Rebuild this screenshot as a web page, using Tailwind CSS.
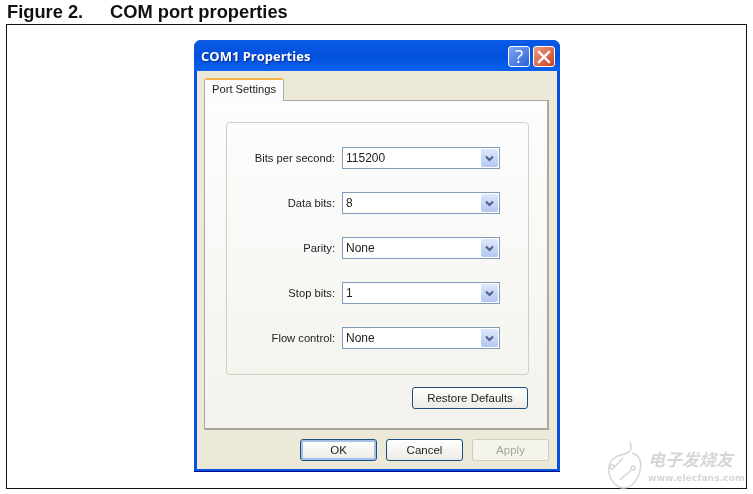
<!DOCTYPE html>
<html lang="en">
<head>
  <meta charset="UTF-8">
  <title>COM port properties</title>
  <script src="https://cdn.jsdelivr.net/npm/@tailwindcss/browser@4"></script>
</head>
<body class="bg-white w-[753px] h-[494px] overflow-hidden font-['Liberation_Sans',sans-serif]">
  <div class="pl-[7px] pt-[2px] h-[24px] flex text-[18.3px] leading-[19px] font-bold text-[#111] blur-[0.3px]">
    <span class="w-[103px]">Figure 2.</span>
    <span>COM port properties</span>
  </div>

  <div class="relative ml-[6px] w-[741px] h-[465px] border border-[#111] pt-[15px] pl-[187px]">
    <!-- dialog window -->
    <div class="w-[366px] h-[432px] flex flex-col rounded-t-[7px] bg-[#0a50e0] p-[3px] pt-0 pb-[3px] shadow-[inset_0_-1px_0_#00138c] blur-[0.4px]">
      <div class="h-[31px] -mx-[3px] px-[7px] rounded-t-[7px] flex items-center justify-between bg-gradient-to-b from-[#0a5ae8] via-[#0450dc] to-[#0a62f0]">
        <span class="pt-[3px] text-[13px] font-bold text-white font-['Open_Sans',sans-serif] [text-shadow:1px_1px_1px_#0a2a90]">COM1 Properties</span>
        <div class="flex gap-[3px] -mr-[2px] mt-[2px]">
          <div class="w-[22px] h-[21px] rounded-[3px] border border-white bg-gradient-to-br from-[#7fa8f2] to-[#2a5fd8] flex items-center justify-center text-white text-[19px] leading-none font-['Open_Sans',sans-serif]">?</div>
          <div class="w-[22px] h-[21px] rounded-[3px] border border-white bg-gradient-to-br from-[#ec9a7c] to-[#c8401c] flex items-center justify-center">
            <svg width="14" height="14" viewBox="0 0 14 14"><path d="M2 2l10 10M12 2L2 12" stroke="#fff" stroke-width="2.4" stroke-linecap="square"/></svg>
          </div>
        </div>
      </div>

      <div class="flex-1 bg-[#ece9d8] px-[7px] pt-[7px] flex flex-col text-[11.2px] text-[#222]">
        <!-- tab strip -->
        <div class="flex h-[23px] -mb-px relative z-10">
          <div class="w-[80px] h-[23px] pb-[3px] bg-[#fcfcfe] rounded-t-[3px] border-t-[2px] border-t-[#f5b445] border-x border-x-[#b0aea0] flex items-center justify-center">Port Settings</div>
        </div>
        <!-- tab panel -->
        <div class="w-[345px] h-[330px] border border-[#a9a89e] border-b-2 border-r-2 bg-gradient-to-b from-[#fdfdfe] to-[#f3f2ec] pt-[21px] pl-[21px]">
          <div class="w-[303px] h-[253px] border border-[#d0d0bf] rounded-[4px] pt-[24px] pl-[20px] flex flex-col gap-[23px]">
            <div class="flex items-center h-[22px]">
              <span class="w-[95px] pr-[7px] text-right whitespace-nowrap">Bits per second:</span>
              <div class="w-[158px] h-[22px] border border-[#7f9db9] bg-white pl-[3px] text-[12px] flex items-center justify-between"><span>115200</span><div class="w-[17px] h-[18px] mr-px rounded-[2px] bg-gradient-to-b from-[#dfe8fb] to-[#b3c7f2] flex items-center justify-center"><svg width="9" height="7" viewBox="0 0 9 7"><path d="M1 1.5l3.5 3.5L8 1.5" fill="none" stroke="#4d6185" stroke-width="2"/></svg></div></div>
            </div>
            <div class="flex items-center h-[22px]">
              <span class="w-[95px] pr-[7px] text-right whitespace-nowrap">Data bits:</span>
              <div class="w-[158px] h-[22px] border border-[#7f9db9] bg-white pl-[3px] text-[12px] flex items-center justify-between"><span>8</span><div class="w-[17px] h-[18px] mr-px rounded-[2px] bg-gradient-to-b from-[#dfe8fb] to-[#b3c7f2] flex items-center justify-center"><svg width="9" height="7" viewBox="0 0 9 7"><path d="M1 1.5l3.5 3.5L8 1.5" fill="none" stroke="#4d6185" stroke-width="2"/></svg></div></div>
            </div>
            <div class="flex items-center h-[22px]">
              <span class="w-[95px] pr-[7px] text-right whitespace-nowrap">Parity:</span>
              <div class="w-[158px] h-[22px] border border-[#7f9db9] bg-white pl-[3px] text-[12px] flex items-center justify-between"><span>None</span><div class="w-[17px] h-[18px] mr-px rounded-[2px] bg-gradient-to-b from-[#dfe8fb] to-[#b3c7f2] flex items-center justify-center"><svg width="9" height="7" viewBox="0 0 9 7"><path d="M1 1.5l3.5 3.5L8 1.5" fill="none" stroke="#4d6185" stroke-width="2"/></svg></div></div>
            </div>
            <div class="flex items-center h-[22px]">
              <span class="w-[95px] pr-[7px] text-right whitespace-nowrap">Stop bits:</span>
              <div class="w-[158px] h-[22px] border border-[#7f9db9] bg-white pl-[3px] text-[12px] flex items-center justify-between"><span>1</span><div class="w-[17px] h-[18px] mr-px rounded-[2px] bg-gradient-to-b from-[#dfe8fb] to-[#b3c7f2] flex items-center justify-center"><svg width="9" height="7" viewBox="0 0 9 7"><path d="M1 1.5l3.5 3.5L8 1.5" fill="none" stroke="#4d6185" stroke-width="2"/></svg></div></div>
            </div>
            <div class="flex items-center h-[22px]">
              <span class="w-[95px] pr-[7px] text-right whitespace-nowrap">Flow control:</span>
              <div class="w-[158px] h-[22px] border border-[#7f9db9] bg-white pl-[3px] text-[12px] flex items-center justify-between"><span>None</span><div class="w-[17px] h-[18px] mr-px rounded-[2px] bg-gradient-to-b from-[#dfe8fb] to-[#b3c7f2] flex items-center justify-center"><svg width="9" height="7" viewBox="0 0 9 7"><path d="M1 1.5l3.5 3.5L8 1.5" fill="none" stroke="#4d6185" stroke-width="2"/></svg></div></div>
            </div>
          </div>
          <div class="mt-[12px] ml-[186px] w-[116px] h-[22px] pt-px border border-[#1c4f7d] rounded-[3px] bg-gradient-to-b from-white to-[#ecebe4] flex items-center justify-center text-[11.5px]">Restore Defaults</div>
        </div>
        <!-- dialog buttons -->
        <div class="mt-[9px] flex justify-end gap-[9px] pr-px text-[11.5px]">
          <div class="w-[77px] h-[22px] pt-px border border-[#1c4f7d] rounded-[3px] bg-gradient-to-b from-white to-[#ecebe4] shadow-[inset_0_0_0_2px_#a6c0ea] flex items-center justify-center">OK</div>
          <div class="w-[77px] h-[22px] pt-px border border-[#1c4f7d] rounded-[3px] bg-gradient-to-b from-white to-[#ecebe4] flex items-center justify-center">Cancel</div>
          <div class="w-[77px] h-[22px] pt-px border border-[#cfcdbf] rounded-[3px] bg-[#f4f3ec] text-[#a5a596] flex items-center justify-center">Apply</div>
        </div>
      </div>
    </div>

    <!-- watermark -->
    <div class="absolute left-[601px] top-[415px] flex items-start gap-[5px] text-[#d6d6d6] blur-[0.5px]">
      <svg width="34" height="49" viewBox="0 0 34 49" fill="none" stroke="#d6d6d6" stroke-width="1.5"><path d="M21.7 1.7c2.3 5 2.2 8-1 10.5C17 15 12 14.500 8.300 16.700 3 20 0.700 24 0.700 29c0 10 7 19 15 19 9 0 17-11 17-24 0-5-3-9.500-8.500-11"/><circle cx="4" cy="27" r="2"/><circle cx="25" cy="28" r="2"/><path d="M6.700 26.700L15 18M23.400 30L11.700 40"/></svg>
      <div class="flex flex-col leading-none mt-[10px] ml-[1px] w-[99px]">
        <span class="block h-[18px] leading-[18px] text-[17px] italic font-bold font-['Noto_Sans_CJK_SC',sans-serif]">电子发烧友</span>
        <span class="block h-[12px] leading-[12px] mt-[4px] text-[9.2px] font-bold font-['DejaVu_Sans',sans-serif] whitespace-nowrap">www.elecfans.com</span>
      </div>
    </div>
  </div>
</body>
</html>
